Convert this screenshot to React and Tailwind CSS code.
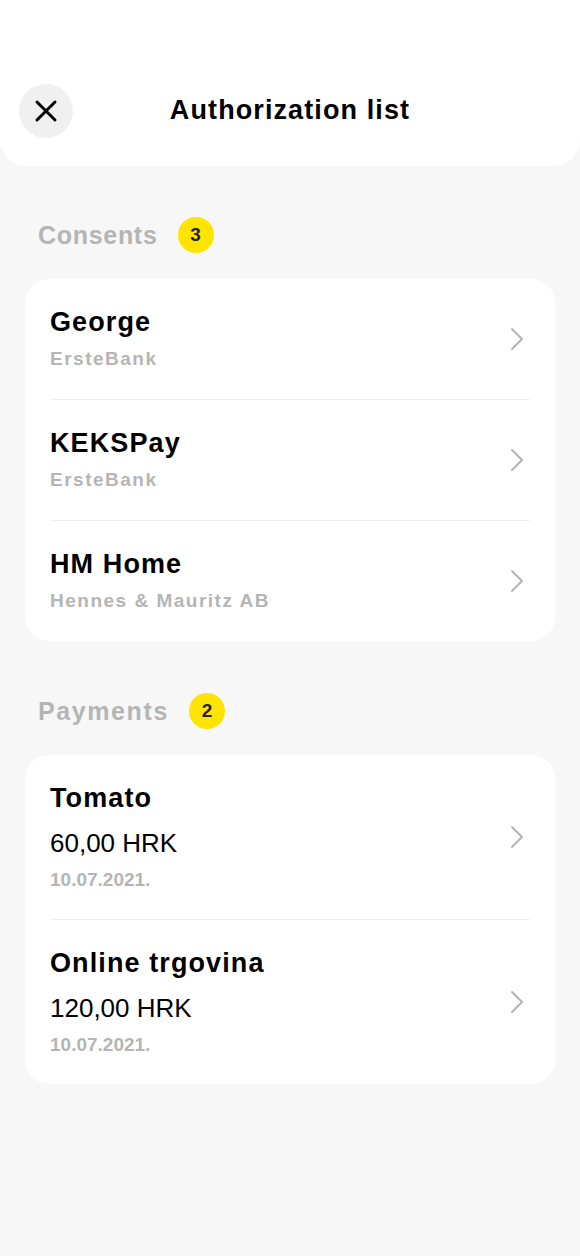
import { X, ChevronRight } from "lucide-react";

const consents = [
  { name: "George", org: "ErsteBank" },
  { name: "KEKSPay", org: "ErsteBank" },
  { name: "HM Home", org: "Hennes & Mauritz AB" },
];

const payments = [
  { name: "Tomato", amount: "60,00 HRK", date: "10.07.2021." },
  { name: "Online trgovina", amount: "120,00 HRK", date: "10.07.2021." },
];

function SectionTitle({ label, count, wide }) {
  return (
    <div className="flex items-center gap-5 px-[38px]">
      <h2
        className={`text-[25px] font-bold text-[#b5b5b5] leading-8 ${wide ? "tracking-[1.6px]" : "tracking-[0.7px]"}`}
      >
        {label}
      </h2>
      <span className="w-9 h-9 rounded-full bg-[#ffe400] flex items-center justify-center text-[19px] font-bold text-[#222]">
        {count}
      </span>
    </div>
  );
}

function Row({ last, children }) {
  return (
    <div className="px-[25px]">
      <div className={`flex items-center justify-between ${last ? "" : "border-b border-[#efefef]"}`}>
        <div className="flex flex-col">{children}</div>
        <ChevronRight className="w-10 h-10 text-[#b3b3b3] mr-[-7px]" strokeWidth={1.2} />
      </div>
    </div>
  );
}

export default function App() {
  return (
    <div className="min-h-[1256px] bg-[#f7f7f7] font-['Liberation_Sans','Arial',sans-serif]">
      <header className="bg-white rounded-b-[26px] h-[166px] pt-[84px] px-[19px] relative">
        <button className="w-[54px] h-[54px] rounded-full bg-[#f0f0f0] flex items-center justify-center">
          <X className="w-[36px] h-[36px] text-black" strokeWidth={2} />
        </button>
        <h1 className="absolute left-0 right-0 top-[92px] text-center text-[27px] font-bold text-black leading-9 tracking-[1.1px]">
          Authorization list
        </h1>
      </header>

      <div className="pt-[51px]">
        <SectionTitle label="Consents" count={3} />
        <div className="mx-[25px] mt-[26px] bg-white rounded-[24px]">
          {consents.map((c, i) => (
            <Row key={c.name} last={i === consents.length - 1}>
              <div className="pt-[27px] pb-[28px]">
                <div className="text-[27px] font-bold text-black leading-[32px] tracking-[1.1px]">{c.name}</div>
                <div className="text-[19px] font-bold text-[#b5b5b5] leading-[24px] mt-[9px] tracking-[1.5px]">{c.org}</div>
              </div>
            </Row>
          ))}
        </div>

        <div className="mt-[52px]">
          <SectionTitle label="Payments" count={2} wide />
        </div>
        <div className="mx-[25px] mt-[26px] bg-white rounded-[24px]">
          {payments.map((p, i) => (
            <Row key={p.name} last={i === payments.length - 1}>
              <div className="pt-[27px] pb-[27px]">
                <div className="text-[27px] font-bold text-black leading-[32px] tracking-[1.1px]">{p.name}</div>
                <div className="text-[26px] text-black leading-[32px] mt-[13px]">{p.amount}</div>
                <div className="text-[19px] font-bold text-[#b5b5b5] leading-[24px] mt-[9px]">{p.date}</div>
              </div>
            </Row>
          ))}
        </div>
      </div>
    </div>
  );
}
